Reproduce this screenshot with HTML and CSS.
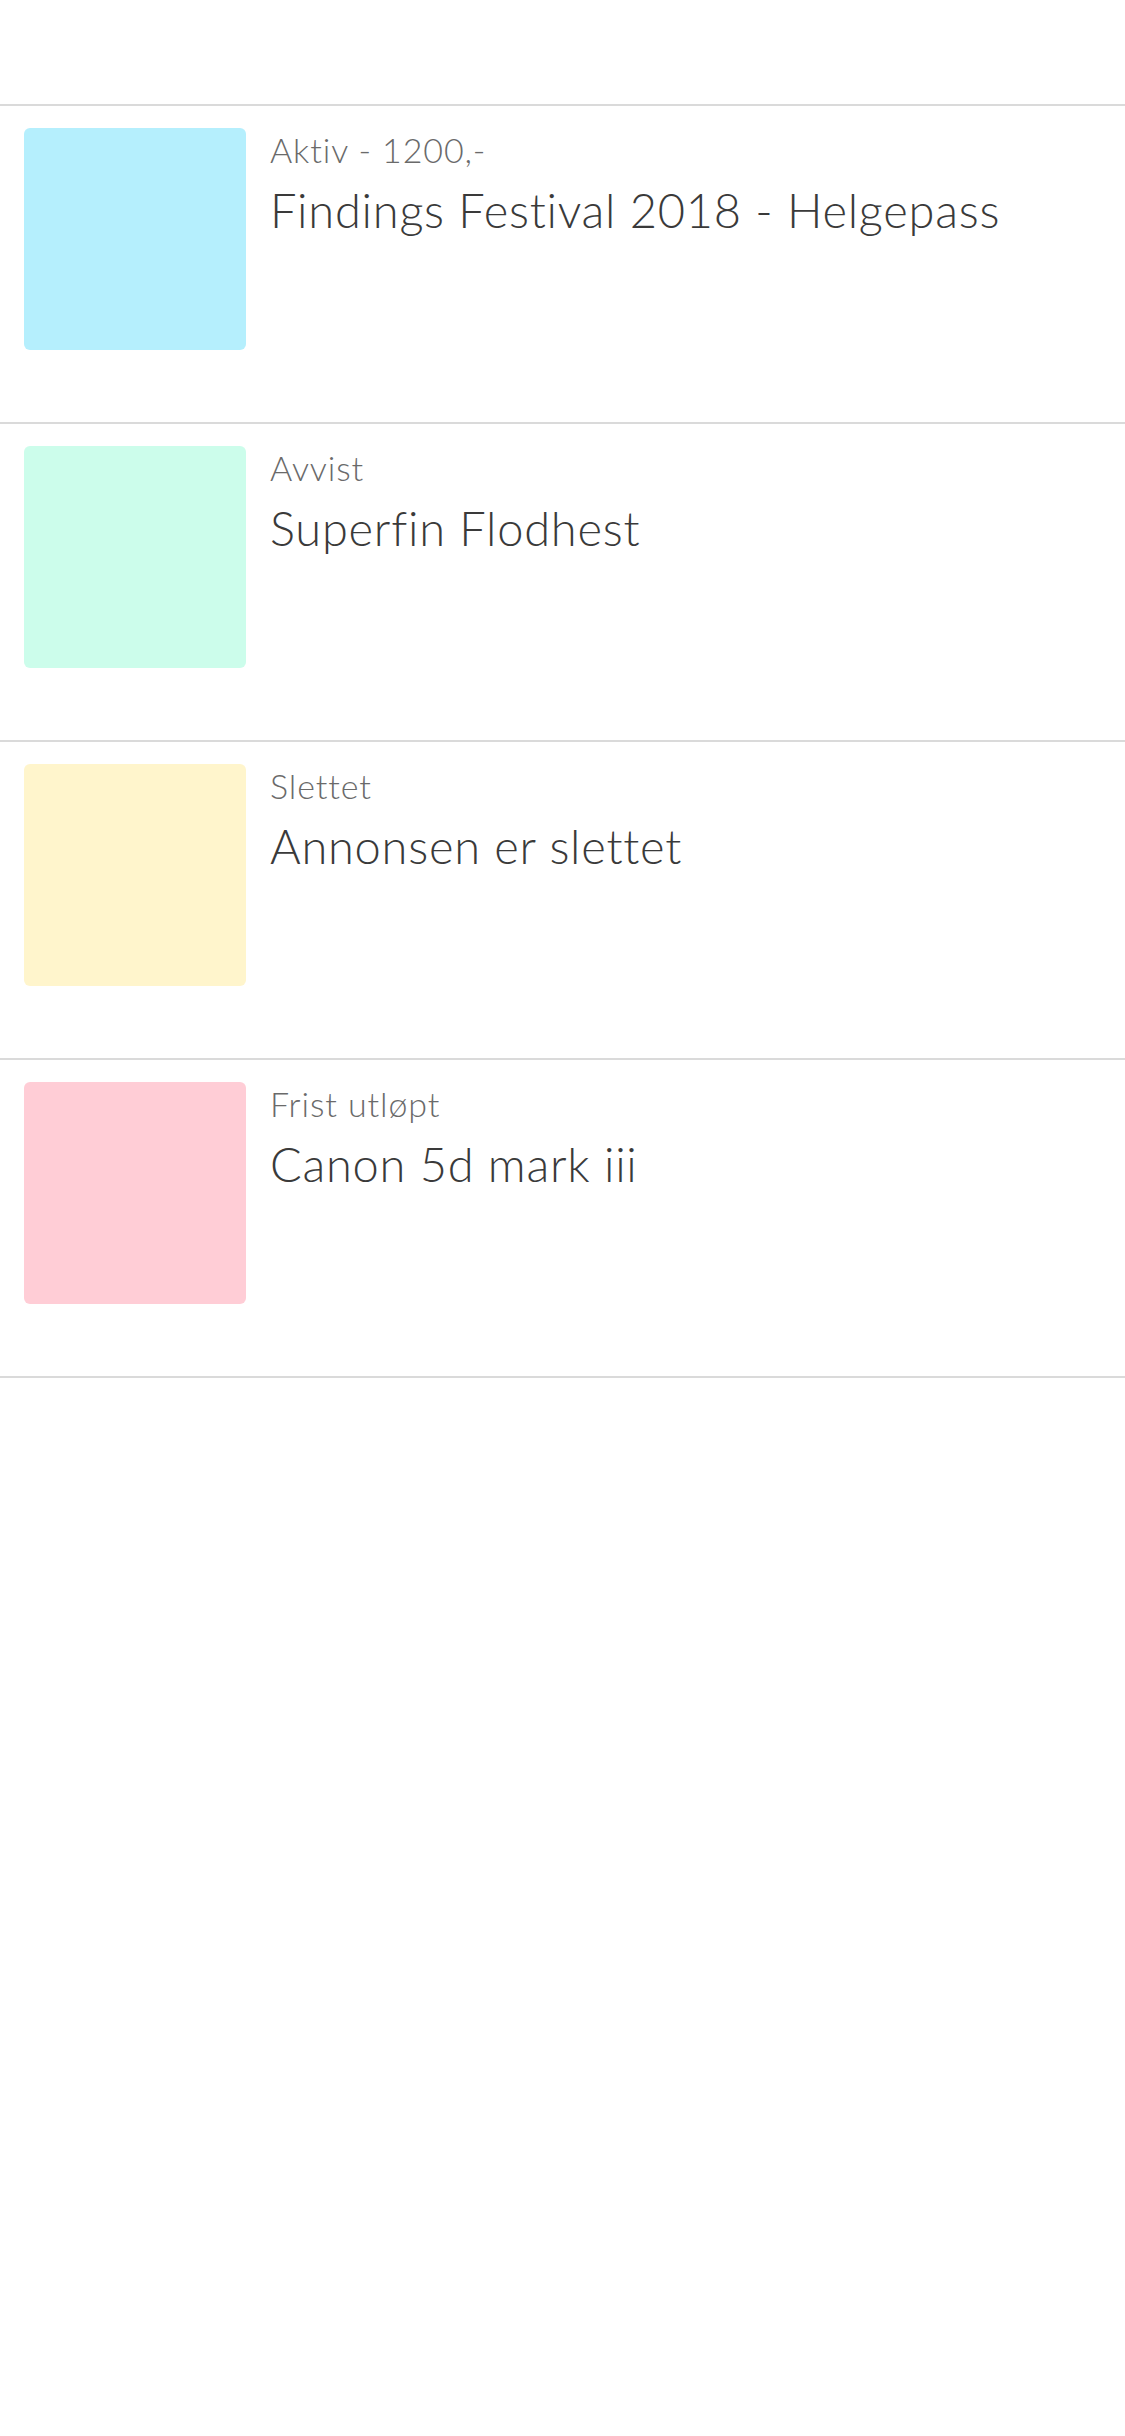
FILE: index.html
```html
<!DOCTYPE html>
<html lang="no">
<head>
<meta charset="utf-8">
<title>Annonser</title>
<link rel="stylesheet" href="styles.css">
</head>
<body>
<div class="header"></div>
<ul class="list">
  <li class="item">
    <div class="thumb thumb-blue"></div>
    <div class="info">
      <div class="status">Aktiv - 1200,-</div>
      <div class="title">Findings Festival 2018 - Helgepass</div>
    </div>
  </li>
  <li class="item">
    <div class="thumb thumb-mint"></div>
    <div class="info">
      <div class="status">Avvist</div>
      <div class="title">Superfin Flodhest</div>
    </div>
  </li>
  <li class="item">
    <div class="thumb thumb-yellow"></div>
    <div class="info">
      <div class="status">Slettet</div>
      <div class="title">Annonsen er slettet</div>
    </div>
  </li>
  <li class="item">
    <div class="thumb thumb-pink"></div>
    <div class="info">
      <div class="status">Frist utløpt</div>
      <div class="title">Canon 5d mark iii</div>
    </div>
  </li>
</ul>
</body>
</html>
```
FILE: styles.css
```css
html, body {
  margin: 0;
  padding: 0;
  background: #ffffff;
  font-family: Lato, "Open Sans", "Liberation Sans", sans-serif;
}
.header {
  height: 104px;
}
.list {
  list-style: none;
  margin: 0;
  padding: 0;
  border-bottom: 2px solid #dadada;
}
.item {
  display: flex;
  gap: 24px;
  border-top: 2px solid #dadada;
  padding: 22px 24px 72px 24px;
}
.thumb {
  flex: 0 0 222px;
  width: 222px;
  height: 222px;
  border-radius: 6px;
}
.thumb-blue { background: #b5effd; }
.thumb-mint { background: #ccfdeb; }
.thumb-yellow { background: #fff5cc; }
.thumb-pink { background: #ffcdd6; }
.info {
  display: flex;
  flex-direction: column;
}
.status {
  font-size: 34px;
  font-weight: 300;
  line-height: 40px;
  letter-spacing: 0.9px;
  color: #6a6a6a;
  margin-top: 2px;
}
.title {
  font-size: 47px;
  font-weight: 300;
  line-height: 56px;
  letter-spacing: 0.75px;
  color: #3a3a3a;
  margin-top: 12px;
}
```
